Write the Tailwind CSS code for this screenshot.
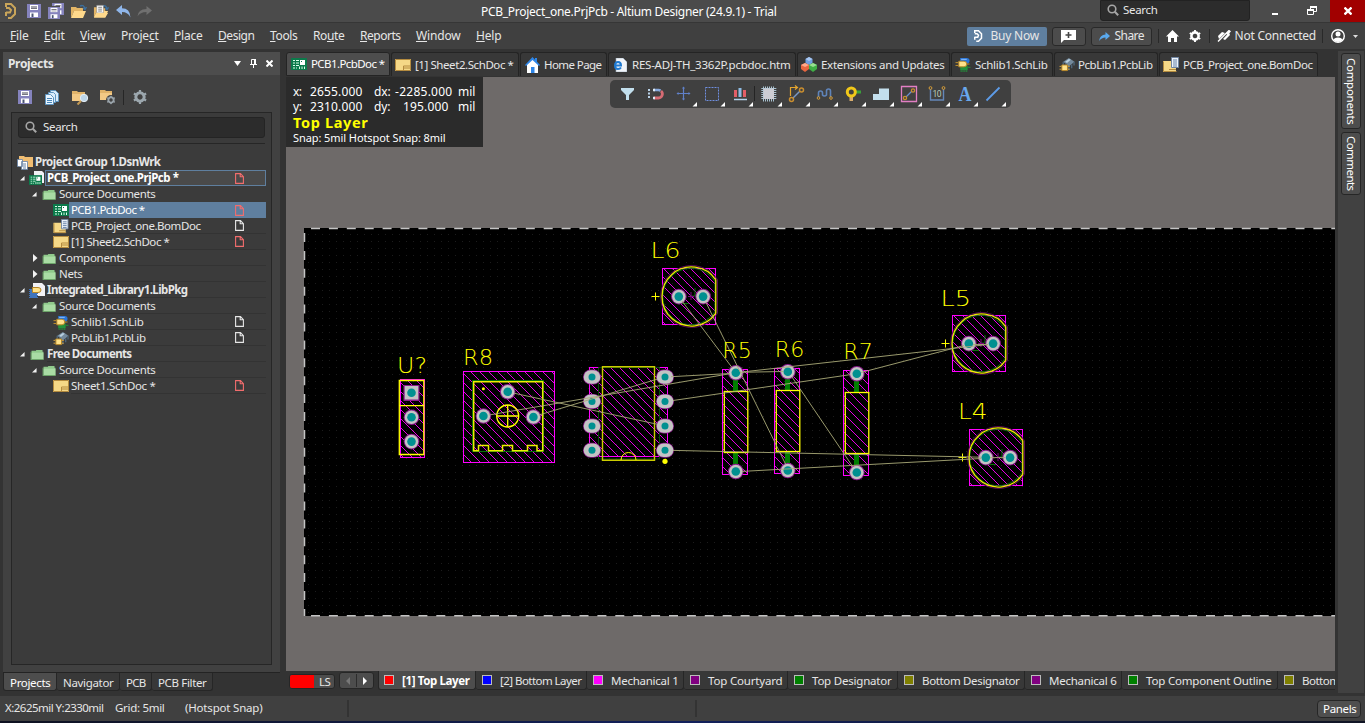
<!DOCTYPE html>
<html lang="en">
<head>
<meta charset="utf-8">
<title>PCB_Project_one.PrjPcb - Altium Designer (24.9.1) - Trial</title>
<script src="https://cdn.jsdelivr.net/npm/@tailwindcss/browser@4"></script>
</head>
<body class="w-[1365px] h-[723px] overflow-hidden bg-[#333333] text-[#e6e6e6] text-[11.5px] leading-4 font-['Noto_Sans','Open_Sans',sans-serif] flex flex-col select-none">

<svg class="hidden" aria-hidden="true">
  <defs>
    <symbol id="save" viewBox="0 0 14 14"><path fill="#8583bd" d="M0 0h14v14H0z"/><path fill="#fff" d="M3 1h8v5H3z"/><path fill="#4b4b5a" d="M4 2.5h6v1H4zM4 4.300h6v.8H4z"/><path fill="#fff" d="M3 8.500h8V13H3z"/><path fill="#4a5575" d="M4.500 9.500h2V13h-2z"/></symbol>
    <symbol id="folder" viewBox="0 0 14 12"><path fill="#8fc98b" d="M1 2h5V1h7v2h1v9H1z"/><path fill="#a9dca4" d="M1 4h13v7H1z"/><path fill="#6da56a" d="M0 3h1v9H0zM1 11h13v1H1z"/></symbol>
    <symbol id="open" viewBox="0 0 17 15"><path fill="#e3b566" d="M1 3h5l1 1h6v3H4l-3 7z"/><path fill="#ffd98c" d="M4 7h12l-3 7H1z"/><path fill="none" stroke="#3d6f9c" stroke-width="1.400" d="M10 2q4-2 5 3M13 4l2 1.500L16.500 3"/></symbol>
    <symbol id="pcb" viewBox="0 0 16 12"><path fill="#0c7a4b" d="M0 0h16v12H0z"/><path fill="#fff" d="M9 2h5v5H9z"/><path fill="#0c7a4b" d="M10 3h1v1h-1z"/><path stroke="#d7ffe9" stroke-width="1" fill="none" d="M2 2.500h2M5 2.500h3M2 5h2M5 5h3M2 7.500h2M5 7.500h3M2 10h2M5 10h1M8.500 8.500V11M11 8.500V11M13.500 8.500V11"/></symbol>
    <symbol id="sch" viewBox="0 0 16 12"><path fill="#f5d887" d="M0 0h16v12H0z"/><path fill="none" stroke="#b48b3f" d="M.5.500h15v11H.5zM8.500 7h6.500M8.500 9h6.500M8.500 7v4.500"/></symbol>
    <symbol id="bom" viewBox="0 0 16 16"><path fill="#f5d887" d="M0 4h13v11H0z"/><path stroke="#b48b3f" fill="none" d="M.5 4.500v10h13M6 12.500h7"/><path fill="#edf3fa" stroke="#7186a3" d="M8.500.500h7v10h-7z"/><path stroke="#6683a8" d="M10 3h4M10 5h4M10 7h4M10 9h4"/></symbol>
    <symbol id="schlib" viewBox="0 0 16 16"><path fill="#2b75d6" d="M5 1h7q3 0 3 3t-3 3H5z"/><path fill="#8ec1ff" d="M6 2h6v1H6z"/><path fill="#24923b" d="M5 9h8v5H5z"/><path stroke="#24923b" d="M6 14v2M8 14v2M10 14v2M12 14v2M13 11h3"/><path fill="#ffe28a" stroke="#b58424" d="M3.500 4.500H9q3 0 3 3t-3 3H3.500z"/><path stroke="#c8942c" d="M0 6h3M0 9h3M12 7.500h3"/></symbol>
    <symbol id="pcblib" viewBox="0 0 16 16"><path fill="#73899c" d="M4 5l6-4 6 4-6 5z"/><path fill="#b8d0e0" d="M6 5l4-3 2 1-4 3.500z"/><path stroke="#4d6579" stroke-width="1.500" fill="none" d="M4 5v4M7 7v4M10 10v4M13 8v4M15.500 5v4"/><path fill="#ffe28a" stroke="#b58424" d="M2.500 8.500h6v6h-6z"/><path stroke="#d6a440" d="M0 10h2M0 13h2M9 10h2M9 13h2"/></symbol>
    <symbol id="file" viewBox="0 0 9 11"><path fill="none" stroke="currentColor" stroke-width="1.100" d="M.6.600h4.900l2.900 3v6.800H.6zM5.200.600v3.200h3.200"/></symbol>
    <symbol id="down" viewBox="0 0 6 6"><path fill="#f2f2f2" d="M5.500 0v5.500H0z"/></symbol>
    <symbol id="right" viewBox="0 0 5 8"><path fill="#f2f2f2" d="M0 0l4.500 4L0 8z"/></symbol>
    <symbol id="lens" viewBox="0 0 12 12"><circle cx="5" cy="5" r="3.800" fill="none" stroke="#a6a6a6" stroke-width="1.600"/><path stroke="#a6a6a6" stroke-width="2" d="M7.800 7.800l3.400 3.400"/></symbol>
    <symbol id="gear" viewBox="0 0 14 14"><path fill="none" stroke="currentColor" stroke-width="3" d="M7 2.800a4.200 4.200 0 1 0 .01 0z"/><path stroke="currentColor" stroke-width="2.200" d="M7 0v3M7 11v3M.9 3.500l2.600 1.500M10.500 9l2.600 1.500M.9 10.500L3.500 9M10.500 5l2.600-1.500"/></symbol>
  </defs>
</svg>

<!-- Title bar -->
<header class="h-[22px] shrink-0 bg-[#4b4b4b] flex items-center relative">
  <div class="flex items-center pl-[5px]">
    <svg class="w-[12px] h-[16px] mr-[10px]" viewBox="0 0 12 16"><path fill="none" stroke="#c9a55a" stroke-width="2" d="M1 4V1h5l4 4v6l-4 4H3M1 9.500h4l1-2.500-2-2H1M1 9v4"/></svg>
    <svg class="size-[14px] mr-[7px]"><use href="#save"/></svg>
    <svg class="w-[16px] h-[16px] mr-[6px]" viewBox="0 0 16 16"><use href="#save" x="4" y="0" width="12" height="12"/><path fill="#4b4b4b" d="M0 3h12v13H0z"/><use href="#save" x="0" y="4" width="12" height="12"/></svg>
    <svg class="w-[17px] h-[15px] mr-[6px]"><use href="#open"/></svg>
    <svg class="w-[16px] h-[15px] mr-[7px]" viewBox="0 0 17 15"><use href="#open" width="17" height="15"/><path fill="#fff" stroke="#8b8b8b" stroke-width=".6" d="M4 1h7v8H4z"/><path stroke="#777" d="M5.500 3h4M5.500 5h4M5.500 7h4"/><path fill="#ffd98c" d="M4 9h12l-3 5H1z"/></svg>
    <svg class="w-[15px] h-[13px] mr-[6px]" viewBox="0 0 15 13"><path fill="#8fb6ea" d="M0 5l6-5v3.300q8 0 8.500 9.200Q12 7 6 7v3z"/></svg>
    <svg class="w-[15px] h-[11px]" viewBox="0 0 15 11"><path fill="#707070" d="M15 4.500L9.500 0v3Q1 3 .5 10.500 3 6 9.500 6v3z"/></svg>
  </div>
  <div class="absolute left-[481px] top-[4px] text-[12px] text-white"><span data-w="295">PCB_Project_one.PrjPcb - Altium Designer (24.9.1) - Trial</span></div>
  <div class="ml-auto flex items-start h-full">
    <div class="w-[150px] h-[21px] bg-[#2c2c2c] border border-[#222] rounded-b-[3px] flex items-center pl-[6px] pb-px mr-[22px]">
      <svg class="size-[12px] mr-[4px]"><use href="#lens"/></svg><span data-w="34">Search</span>
    </div>
    <svg class="w-[7px] h-[22px] mr-[28px]" viewBox="0 0 7 22"><path fill="#fff" d="M0 13h6v2H0z"/></svg>
    <svg class="w-[10px] h-[22px] mr-[13px]" viewBox="0 0 10 22"><path fill="none" stroke="#fff" d="M3.500 9V6.500h6v5H7M.5 9.500h6v5h-6z"/><path fill="#fff" d="M3 6h7v2H3zM0 9h7v2H0z"/></svg>
    <div class="w-[35px] h-[22px] bg-[#a10000] flex items-center justify-center"><svg class="size-[8px]" viewBox="0 0 8 8"><path stroke="#fff" stroke-width="2.300" d="M.5.500l7 7M7.500.500l-7 7"/></svg></div>
  </div>
</header>

<!-- Menu bar -->
<nav class="h-[27px] shrink-0 bg-[#404040] border-t border-[#363636] flex items-center">
  <div class="flex gap-[15.5px] pl-[10px] text-[12px]">
    <span data-w="18"><u>F</u>ile</span><span data-w="20"><u>E</u>dit</span><span data-w="25"><u>V</u>iew</span><span data-w="37">Proje<u>c</u>t</span><span data-w="28"><u>P</u>lace</span><span data-w="36"><u>D</u>esign</span><span data-w="27"><u>T</u>ools</span><span data-w="31">Ro<u>u</u>te</span><span data-w="40"><u>R</u>eports</span><span data-w="44"><u>W</u>indow</span><span data-w="25"><u>H</u>elp</span>
  </div>
  <div class="ml-auto flex items-center pr-[7px] text-[12px]">
    <div class="w-[80px] h-[19px] rounded-[2px] bg-[#5f7f9f] flex items-center pl-[7px] mr-[5px]"><svg class="w-[9px] h-[12px] mr-[8px]" viewBox="0 0 12 16"><path fill="none" stroke="#fff" stroke-width="2" d="M1 4V1h5l4 4v6l-4 4H3M1 9.500h4l1-2.500-2-2H1M1 9v4"/></svg><span data-w="48">Buy Now</span></div>
    <div class="w-[34px] h-[19px] rounded-[3px] bg-[#4c4c4c] border border-[#292929] flex items-center justify-center mr-[5px]"><svg class="w-[17px] h-[13px]" viewBox="0 0 17 13"><path fill="#fff" d="M1 0h15v10H4l-3 3z"/><path stroke="#444" stroke-width="1.600" d="M8.500 2v6M5.500 5h6"/></svg></div>
    <div class="w-[61px] h-[19px] rounded-[3px] bg-[#4c4c4c] border border-[#292929] flex items-center pl-[7px] mr-[6px]"><svg class="w-[11px] h-[9px] mr-[5px]" viewBox="0 0 11 9"><path fill="#5aa9ee" d="M11 4L6.500 0v2.500Q1 2.500 0 9q2.500-3.500 6.500-3.500V8z"/></svg><span data-w="29">Share</span></div>
    <i class="w-px h-[14px] bg-[#292929] mr-[7px]"></i>
    <svg class="w-[13px] h-[12px] mr-[10px]" viewBox="0 0 13 12"><path fill="#fff" d="M6.500 0L0 6.500h2V12h3V8h3v4h3V6.500h2z"/></svg>
    <svg class="size-[12px] mr-[8px] text-white"><use href="#gear"/></svg>
    <i class="w-px h-[14px] bg-[#292929] mr-[7px]"></i>
    <svg class="w-[14px] h-[12px] mr-[4px]" viewBox="0 0 14 12"><path fill="#fff" d="M1 6l4-4 3 1L2 9zM8 10l5-5-1-2.500L6 9z"/><path stroke="#fff" stroke-width="1.400" d="M12.500 0L1 11.500M10 4.500L13.500 1"/></svg>
    <span data-w="81">Not Connected</span>
    <i class="w-px h-[14px] bg-[#292929] ml-[6px] mr-[8px]"></i>
    <svg class="size-[14px] mr-[8px]" viewBox="0 0 14 14"><circle cx="7" cy="7" r="6.300" fill="none" stroke="#fff" stroke-width="1.400"/><circle cx="7" cy="5" r="2.500" fill="#fff"/><path fill="#fff" d="M2.500 11Q3 8.500 7 8.500t4.500 2.500Q9 13 7 13t-4.500-2z"/></svg>
    <svg class="w-[5px] h-[3px]" viewBox="0 0 5 3"><path fill="#ddd" d="M0 0h5L2.500 3z"/></svg>
  </div>
</nav>

<main class="flex h-[647px] shrink-0">
  <!-- Projects panel -->
  <section class="w-[283px] pl-[3px] pt-[3px] shrink-0">
    <div class="w-[277px] h-[621px] bg-[#414141] border-b border-[#232323]">
      <div class="h-[23px] bg-[#4d4d4d] flex items-center pl-[5px] pr-[7px] text-[12px] font-bold">
        <span data-w="45">Projects</span>
        <svg class="w-[7px] h-[5px] ml-auto mr-[9px]" viewBox="0 0 7 5"><path fill="#fff" d="M0 0h7L3.500 5z"/></svg>
        <svg class="w-[7px] h-[9px] mr-[9px]" viewBox="0 0 7 9"><path fill="none" stroke="#fff" d="M1.500 5V.5h4V5M0 5.500h7M3.500 5.500V9"/><path fill="#fff" d="M4 0h2v5H4z"/></svg>
        <svg class="size-[7px]" viewBox="0 0 7 7"><path stroke="#fff" stroke-width="2" d="M.5.500l6 6M6.500.500l-6 6"/></svg>
      </div>
      <div class="h-[37px] flex items-center pl-[15px] pt-[7px]">
        <svg class="size-[14px] mr-[13px]"><use href="#save"/></svg>
        <svg class="w-[14px] h-[15px] mr-[13px]" viewBox="0 0 14 15"><path fill="#d9ecfb" stroke="#5f95bf" d="M5.500.500h5l3 3v8h-8z"/><path fill="#d9ecfb" stroke="#5f95bf" d="M3.500 2.500h5l2 2v8h-7z"/><path fill="#e9f5ff" stroke="#5f95bf" d="M.5 4.500h5l3 3v7h-8z"/><path stroke="#4986b8" d="M2 8.500h5M2 10.500h5M2 12.500h5"/></svg>
        <svg class="w-[17px] h-[15px] mr-[11px]" viewBox="0 0 17 15"><path fill="#e0b36a" d="M0 1h5l1 1h7v9H0z"/><path fill="#f2c985" d="M0 4h13v7H0z"/><circle cx="12" cy="8" r="3.700" fill="#bcd5e8" stroke="#e3edf5"/><path stroke="#c39a55" stroke-width="2" d="M9 11l-3.500 3.500"/></svg>
        <svg class="w-[16px] h-[16px] mr-[7px]" viewBox="0 0 16 16"><path fill="#e0b36a" d="M0 1h5l1 1h6v9H0z"/><path fill="#f2c985" d="M0 4h12v7H0z"/><circle cx="11" cy="11" r="5" fill="#414141"/><svg x="6.500" y="6.500" width="9" height="9" color="#9aa4ab"><use href="#gear"/></svg></svg>
        <i class="w-px h-[15px] bg-[#262626] mr-[9px]"></i>
        <svg class="size-[14px] text-[#9ca7ae]"><use href="#gear"/></svg>
      </div>
      <div class="ml-[8px] w-[261px] h-[553px] bg-[#3b3b3b] border border-[#262626] pl-[6px]">
        <div class="mt-[4px] w-[247px] h-[21px] bg-[#2c2c2c] border border-[#242424] rounded-[3px] flex items-center pl-[6px] pb-px"><svg class="size-[12px] mr-[6px]"><use href="#lens"/></svg><span data-w="34">Search</span></div>
        <div class="mt-[5px] w-[247px] h-px bg-[#262626]"></div>
        <!-- Project tree -->
        <div class="mt-[10px] w-[248px]">
          <div class="flex h-4 items-center font-bold"><svg class="w-[16px] h-[15px] mr-px -ml-px" viewBox="0 0 16 15"><path fill="#f0bd72" d="M2 1h5l1 1h8v10H2z"/><path fill="#fff" stroke="#6682a5" stroke-width=".8" d="M.5 4.500h5v7h-5zM4.500 6.500h6v8h-6z"/><path stroke="#6682a5" d="M6 9h3M6 11h3M6 13h3"/></svg><span data-w="125" class="ml-px">Project Group 1.DsnWrk</span></div>
          <div class="flex h-4 items-center font-bold text-white"><svg class="size-[5px] ml-[2px] mr-[4px]"><use href="#down"/></svg><svg class="w-[16px] h-[15px]" viewBox="0 0 16 15"><path fill="#f1f1f5" d="M5 0h8l2 2v10H5z"/><use href="#pcb" y="4" width="13" height="10"/></svg><div class="flex items-center w-[221px] h-4 border border-[#5f7f9f] bg-[#4a4a4a] pl-px"><span data-w="131">PCB_Project_one.PrjPcb *</span><svg class="w-[9px] h-[11px] ml-auto mr-[21px] text-[#f26d6d]"><use href="#file"/></svg></div></div>
          <div class="flex h-4 items-center"><svg class="size-[5px] ml-[14px] mr-[5px]"><use href="#down"/></svg><svg class="w-[14px] h-[11px] mr-[3px]"><use href="#folder"/></svg><div class="flex items-center w-[207px] h-4"><span data-w="96">Source Documents</span></div></div>
          <div class="flex h-4 items-center"><svg class="w-[16px] h-[12px] ml-[35px]"><use href="#pcb"/></svg><div class="flex items-center w-[197px] h-4 bg-[#5f7f9f] text-white pl-[2px]"><span data-w="73">PCB1.PcbDoc *</span><svg class="w-[9px] h-[11px] ml-auto mr-[22px] text-[#f26d6d]"><use href="#file"/></svg></div></div>
          <div class="flex h-4 items-center"><svg class="w-[16px] h-[15px] ml-[35px] mr-[2px]"><use href="#bom"/></svg><div class="flex items-center w-[195px] h-4 border-b border-[#333]"><span data-w="129">PCB_Project_one.BomDoc</span><svg class="w-[9px] h-[11px] ml-auto mr-[22px]"><use href="#file"/></svg></div></div>
          <div class="flex h-4 items-center"><svg class="w-[16px] h-[12px] ml-[35px] mr-[2px]"><use href="#sch"/></svg><div class="flex items-center w-[195px] h-4 border-b border-[#333]"><span data-w="98">[1] Sheet2.SchDoc *</span><svg class="w-[9px] h-[11px] ml-auto mr-[22px] text-[#f26d6d]"><use href="#file"/></svg></div></div>
          <div class="flex h-4 items-center"><svg class="w-[5px] h-[8px] ml-[15px] mr-[4px]"><use href="#right"/></svg><svg class="w-[14px] h-[11px] mr-[3px]"><use href="#folder"/></svg><div class="flex items-center w-[207px] h-4 border-b border-[#333]"><span data-w="66">Components</span></div></div>
          <div class="flex h-4 items-center"><svg class="w-[5px] h-[8px] ml-[15px] mr-[4px]"><use href="#right"/></svg><svg class="w-[14px] h-[11px] mr-[3px]"><use href="#folder"/></svg><div class="flex items-center w-[207px] h-4 border-b border-[#333]"><span data-w="23">Nets</span></div></div>
          <div class="flex h-4 items-center font-bold"><svg class="size-[5px] ml-[2px] mr-[4px]"><use href="#down"/></svg><svg class="w-[16px] h-[15px] mr-[2px]" viewBox="0 0 16 15"><path fill="#f1f1f5" d="M4 0h9l3 3v10H4z"/><path fill="#3f74bd" d="M1 7h7v7H1z"/><path stroke="#3f74bd" stroke-dasharray="1 1" stroke-width="9" d="M4.500 6v9"/><path fill="#ffe28a" stroke="#b58424" d="M3.500 4.500H9q3 0 3 2.500t-3 2.500H3.500z"/></svg><div class="flex items-center w-[219px] h-4 border-b border-[#333]"><span data-w="140">Integrated_Library1.LibPkg</span></div></div>
          <div class="flex h-4 items-center"><svg class="size-[5px] ml-[14px] mr-[5px]"><use href="#down"/></svg><svg class="w-[14px] h-[11px] mr-[3px]"><use href="#folder"/></svg><div class="flex items-center w-[207px] h-4 border-b border-[#333]"><span data-w="96">Source Documents</span></div></div>
          <div class="flex h-4 items-center"><svg class="w-[16px] h-[15px] ml-[35px] mr-[2px]"><use href="#schlib"/></svg><div class="flex items-center w-[195px] h-4 border-b border-[#333]"><span data-w="72">Schlib1.SchLib</span><svg class="w-[9px] h-[11px] ml-auto mr-[22px]"><use href="#file"/></svg></div></div>
          <div class="flex h-4 items-center"><svg class="w-[16px] h-[15px] ml-[35px] mr-[2px]"><use href="#pcblib"/></svg><div class="flex items-center w-[195px] h-4 border-b border-[#333]"><span data-w="74">PcbLib1.PcbLib</span><svg class="w-[9px] h-[11px] ml-auto mr-[22px]"><use href="#file"/></svg></div></div>
          <div class="flex h-4 items-center font-bold"><svg class="size-[5px] ml-[2px] mr-[5px]"><use href="#down"/></svg><svg class="w-[14px] h-[11px] mr-[3px]"><use href="#folder"/></svg><div class="flex items-center w-[219px] h-4 border-b border-[#333]"><span data-w="84">Free Documents</span></div></div>
          <div class="flex h-4 items-center"><svg class="size-[5px] ml-[14px] mr-[5px]"><use href="#down"/></svg><svg class="w-[14px] h-[11px] mr-[3px]"><use href="#folder"/></svg><div class="flex items-center w-[207px] h-4 border-b border-[#333]"><span data-w="96">Source Documents</span></div></div>
          <div class="flex h-4 items-center"><svg class="w-[16px] h-[12px] ml-[35px] mr-[2px]"><use href="#sch"/></svg><div class="flex items-center w-[195px] h-4 border-b border-[#333]"><span data-w="84">Sheet1.SchDoc *</span><svg class="w-[9px] h-[11px] ml-auto mr-[22px] text-[#f26d6d]"><use href="#file"/></svg></div></div>
        </div>
      </div>
    </div>
    <div class="flex h-[18px]">
      <div class="w-[54px] bg-[#4d4d4d] border border-t-0 border-[#262626] rounded-b-[3px] pl-[6px] text-white leading-[19px]"><span data-w="40">Projects</span></div>
      <div class="w-[63px] bg-[#383838] border-r border-b border-[#262626] rounded-b-[3px] pl-[6px] leading-[19px]"><span data-w="50">Navigator</span></div>
      <div class="w-[32px] bg-[#383838] border-r border-b border-[#262626] rounded-b-[3px] pl-[6px] leading-[19px]"><span data-w="19">PCB</span></div>
      <div class="w-[61px] bg-[#383838] border-r border-b border-[#262626] rounded-b-[3px] pl-[6px] leading-[19px]"><span data-w="48">PCB Filter</span></div>
    </div>
  </section>

  <!-- Document area -->
  <section class="w-[1052px] pl-[3px] shrink-0 flex flex-col">
    <div class="h-[28px] pt-[3px] flex gap-px shrink-0">
      <div class="w-[104px] h-[24px] bg-[#4d4d4d] border border-[#242424] rounded-t-[3px] flex items-center pl-[4px] text-white"><svg class="w-[16px] h-[12px] mr-[4px]"><use href="#pcb"/></svg><span data-w="73">PCB1.PcbDoc *</span></div>
      <div class="w-[128px] h-[24px] bg-[#383838] border border-b-0 border-[#242424] rounded-t-[3px] flex items-center pl-[3px]"><svg class="w-[16px] h-[12px] mr-[4px]"><use href="#sch"/></svg><span data-w="98">[1] Sheet2.SchDoc *</span></div>
      <div class="w-[87px] h-[24px] bg-[#383838] border border-b-0 border-[#242424] rounded-t-[3px] flex items-center pl-[4px]"><svg class="w-[15px] h-[16px] mr-[4px]" viewBox="0 0 15 16"><path fill="#fff" d="M2 7l5.500-5L13 7v9H2z"/><path fill="#2e86e8" d="M7.500 0L0 8l1 1 6.500-6L14 9l1-1-3-3.200V1h-2v1.700zM6 10h3.500v6H6z"/></svg><span data-w="57">Home Page</span></div>
      <div class="w-[188px] h-[24px] bg-[#383838] border border-b-0 border-[#242424] rounded-t-[3px] flex items-center pl-[4px]"><svg class="w-[14px] h-[14px] mr-[5px]" viewBox="0 0 14 14"><path fill="#f2f5fa" stroke="#9ab" stroke-width=".6" d="M3 0h7l4 4v10H3z"/><path fill="none" stroke="#1f7ad1" stroke-width="2" d="M2 7.500h6Q8 4 5 4T2 7.500 5 11q2 0 3-1.500"/></svg><span data-w="158">RES-ADJ-TH_3362P.pcbdoc.htm</span></div>
      <div class="w-[153px] h-[24px] bg-[#383838] border border-b-0 border-[#242424] rounded-t-[3px] flex items-center pl-[3px]"><svg class="w-[16px] h-[15px] mr-[4px]" viewBox="0 0 16 15"><path fill="#6f9fe0" d="M8 0l3.500 2v4L8 8 4.500 6V2z"/><path fill="#a9c8f2" d="M8 0l3.500 2L8 4 4.500 2z"/><path fill="#e8663f" d="M4 6l4 2v4l-4 3-4-3V8z"/><path fill="#ffa98a" d="M4 6l4 2-4 2-4-2z"/><path fill="#3fae45" d="M12 6l4 2v4l-4 3-4-3V8z"/><path fill="#98e092" d="M12 6l4 2-4 2-4-2z"/></svg><span data-w="123">Extensions and Updates</span></div>
      <div class="w-[102px] h-[24px] bg-[#383838] border border-b-0 border-[#242424] rounded-t-[3px] flex items-center pl-[3px]"><svg class="w-[16px] h-[15px] mr-[4px]"><use href="#schlib"/></svg><span data-w="72">Schlib1.SchLib</span></div>
      <div class="w-[104px] h-[24px] bg-[#383838] border border-b-0 border-[#242424] rounded-t-[3px] flex items-center pl-[4px]"><svg class="w-[16px] h-[15px] mr-[3px]"><use href="#pcblib"/></svg><span data-w="74">PcbLib1.PcbLib</span></div>
      <div class="w-[159px] h-[24px] bg-[#383838] border border-b-0 border-[#242424] rounded-t-[3px] flex items-center pl-[3px]"><svg class="w-[16px] h-[16px] mr-[4px]"><use href="#bom"/></svg><span data-w="129">PCB_Project_one.BomDoc</span></div>
    </div>

    <div class="relative h-[594px] w-[1049px] bg-[#6e6a69] shrink-0">
      <!-- Board canvas: viewBox uses window coordinates -->
      <svg class="block w-[1049px] h-[594px]" viewBox="286 77 1049 594">
        <defs>
          <pattern id="dots" x="305" y="231" width="7" height="7" patternUnits="userSpaceOnUse"><path fill="#1c1c1c" d="M3 3h1v1H3z"/></pattern>
          <pattern id="hatch" width="9" height="9" patternUnits="userSpaceOnUse"><path stroke="#f0f" stroke-width=".9" d="M-1-1l11 11M-1 8l2 2M8-1l2 2"/></pattern>
          <g id="pad"><circle r="7.800" fill="#8a1a8a"/><circle r="6.800" fill="#c3c3c3"/><circle r="4.300" fill="#009090"/></g>
          <g id="oval"><rect x="-9" y="-7.500" width="18" height="15" rx="7.500" fill="#8a1a8a"/><rect x="-8.300" y="-6.800" width="16.600" height="13.600" rx="6.800" fill="#c3c3c3"/><circle r="3.500" fill="#009090"/></g>
          <g id="led" fill="none">
            <rect x="-28.500" y="-27.500" width="53" height="56" fill="url(#hatch)" stroke="#f0f"/>
            <path stroke="#5a0a5a" d="M26.500-16.500A31 31 0 1 0 26.500 17.500z"/>
            <path stroke="#087008" d="M24-14.500A28.300 28.300 0 1 0 24 15.500z"/>
            <path stroke="#ee0" stroke-width="1.300" d="M24.800-16.200A29.500 29.500 0 1 0 24.800 17.200z"/>
            <path stroke="#087008" d="M4-8v8h-5M-10 7.500h8"/><path stroke="#800080" d="M-3 .5h6M0-4v8"/>
            <path stroke="#ff0" d="M-39.500.500h8M-35.500-3.500v8"/>
            <use href="#pad" x="-12.200" y=".6"/><use href="#pad" x="12.100" y=".6"/>
          </g>
          <g id="res" fill="none">
            <rect x="-13.500" y="-2.500" width="25" height="105" fill="url(#hatch)" stroke="#f0f"/>
            <path stroke="#007e00" stroke-width="5" d="M-.5 0v99"/>
            <rect x="-11.700" y="19.500" width="23.500" height="61" fill="#000"/>
            <rect x="-11.700" y="19.500" width="23.500" height="61" fill="url(#hatch)" stroke="#ff0" stroke-width="1.300"/>
            <use href="#pad" x="-.2" y=".7"/><use href="#pad" x="-.2" y="99.500"/>
          </g>
        </defs>
        <path fill="#000" d="M304 228h1031v388H304z"/>
        <path fill="url(#dots)" d="M305 230h1030v384H305z"/>
        <g stroke="#c4c4c4" stroke-width="1.500" stroke-dasharray="9 8.900" fill="none">
          <path d="M311 228.500h1024M311 615.800h1024M304.500 233v383"/>
        </g>

        <!-- U? -->
        <rect x="400.500" y="379.500" width="24" height="78" fill="url(#hatch)" stroke="#f0f"/>
        <path fill="none" stroke="#ff0" stroke-width="1.300" d="M399.300 380.500h24.500v74h-24.500zM399.300 405.700h24.500"/>
        <path fill="#8a1a8a" d="M403.500 385h16v16h-16z"/><path fill="#c3c3c3" d="M404.700 386h13.600v13.500h-13.600z"/><circle cx="411.500" cy="392.700" r="4.300" fill="#009090"/>
        <use href="#pad" x="411.500" y="417.300"/><use href="#pad" x="411.500" y="441.600"/>

        <!-- R8 -->
        <rect x="463.500" y="371.500" width="91" height="91" fill="url(#hatch)" stroke="#f0f"/>
        <path fill="none" stroke="#087008" d="M472.500 380.500h71v71h-71z"/>
        <path fill="none" stroke="#ee0" stroke-width="1.500" d="M473.700 381.700h69v69H537v-5.200h-9.500v5.200h-15v-5.200h-10v5.200h-14v-5.200h-10v5.200h-4.800z"/>
        <g fill="none" stroke="#ff0" stroke-width="1.300"><circle cx="507.700" cy="416" r="11"/><path d="M496.700 416h22M507.700 405v22"/></g>
        <circle cx="483.400" cy="388.700" r="1.500" fill="#ff0"/>
        <use href="#pad" x="507.700" y="391.800"/><use href="#pad" x="483.400" y="416"/><use href="#pad" x="533.400" y="417"/>

        <!-- DIP-8 -->
        <rect x="589.500" y="367.500" width="78" height="89" fill="url(#hatch)" stroke="#f0f"/>
        <path fill="none" stroke="#064d06" d="M598.500 367.500h61v91.500h-61z"/>
        <path fill="none" stroke="#cc0" stroke-width="1.400" d="M602.500 366.700h52v93.600h-52z"/><path fill="none" stroke="#ff0" d="M621 460a7.500 7.500 0 0 1 15 0"/>
        <use href="#oval" x="592" y="377"/><use href="#oval" x="592" y="401.400"/><use href="#oval" x="592" y="426"/><use href="#oval" x="592" y="450.300"/>
        <use href="#oval" x="665" y="377"/><use href="#oval" x="665" y="401.400"/><use href="#oval" x="665" y="426"/><use href="#oval" x="665" y="450.300"/>
        <circle cx="665" cy="461.300" r="2.600" fill="#ff0"/>

        <use href="#res" x="736" y="372"/><use href="#res" x="788" y="371"/><use href="#res" x="857" y="373"/>
        <use href="#led" x="691" y="296"/><use href="#led" x="981" y="343"/><use href="#led" x="998" y="457"/>

        <!-- Connection lines -->
        <g stroke="#aaaa78" stroke-width=".9" fill="none">
          <path d="M682 301L732 367.500M706 302.500L785.500 464M792 377L853 467M740 372.300L783 371.500M671 376.700L730 373.500M742 372L988 344.500M861 372.500L964 345.500M673 400.500L850 374.700M673 450.400L981 457.200M742 471.400L981 458.500M973 344.500h15M990 457.600h15"/>
          <path d="M514 393.200L657 424.200M489 415L730 373.700M539 415L657 379.200"/>
        </g>

        <g fill="#ff0" font-family="DejaVu Sans Light, 'DejaVu Sans', Inter, sans-serif" font-weight="200" font-size="21.500">
          <text x="650.500" y="258.300" textLength="30" lengthAdjust="spacingAndGlyphs">L6</text>
          <text x="722.300" y="358" textLength="29.500" lengthAdjust="spacingAndGlyphs">R5</text>
          <text x="774.800" y="357" textLength="29.500" lengthAdjust="spacingAndGlyphs">R6</text>
          <text x="843.300" y="359" textLength="29.500" lengthAdjust="spacingAndGlyphs">R7</text>
          <text x="397" y="372.500" textLength="30" lengthAdjust="spacingAndGlyphs">U?</text>
          <text x="463" y="365.200" textLength="30" lengthAdjust="spacingAndGlyphs">R8</text>
          <text x="940.500" y="306" textLength="30.500" lengthAdjust="spacingAndGlyphs">L5</text>
          <text x="958" y="419" textLength="29.500" lengthAdjust="spacingAndGlyphs">L4</text>
        </g>
      </svg>

      <!-- Heads-up display -->
      <div class="absolute left-0 top-0 w-[197px] h-[70px] bg-[#2b2b2b] text-white pl-[7px] pt-[7px] text-[12px] leading-[15px]">
        <div class="flex h-[15px]"><div class="w-[17px]"><span data-w="8">x:</span></div><div class="w-[64px]"><span data-w="52">2655.000</span></div><div class="w-[21px]"><span data-w="16">dx:</span></div><div class="w-[63px]"><span data-w="57">-2285.000</span></div><span data-w="17">mil</span></div>
        <div class="flex h-[15px]"><div class="w-[17px]"><span data-w="8">y:</span></div><div class="w-[64px]"><span data-w="52">2310.000</span></div><div class="w-[29px]"><span data-w="16">dy:</span></div><div class="w-[55px]"><span data-w="45">195.000</span></div><span data-w="17">mil</span></div>
        <div class="h-[17px] leading-[17px] text-[14.500px] font-bold text-[#ff0]"><span data-w="75">Top Layer</span></div>
        <div class="h-[13px] text-[11px] leading-[13px]"><span data-w="152">Snap: 5mil Hotspot Snap: 8mil</span></div>
      </div>

      <!-- Active bar -->
      <div class="absolute left-[324px] top-[3px] w-[401px] h-[28px] bg-[#404040] rounded-[5px]">
        <svg class="block w-[401px] h-[28px]" viewBox="610 80 401 28">
          <path fill="#c2dfed" d="M621 88h13v2l-5 5v5h-3v-5l-5-5z"/>
          <path fill="none" stroke="#87a8dc" stroke-width="2.600" d="M654 90h4.500a4 4 0 0 1 2 .6"/><path fill="none" stroke="#d66b73" stroke-width="2.800" d="M654 98h4.500a4 4 0 0 0 2.500-7"/><path stroke="#b9d2e8" stroke-width="2" stroke-dasharray="2 1.500" d="M649 89v10"/><path stroke="#dceaf5" stroke-width="2.500" d="M653 90h2M653 98h2"/>
          <path stroke="#6080c8" stroke-width="1.200" d="M683.500 87v13M677 93.500h13"/><path fill="#6080c8" d="M682 88.500h3l-1.500-2zM682 98.500h3l-1.500 2zM678.500 92v3l-2-1.500zM688.500 92v3l2-1.500z"/>
          <path fill="none" stroke="#6f8fe0" stroke-dasharray="2 1" d="M705.500 87.500h13v13h-13z"/>
          <path stroke="#e25e68" stroke-width="3" d="M735.500 90v7M744.500 90v7"/><path stroke="#8fbce5" stroke-width="3" d="M740 88v9"/><path stroke="#b3d1eb" stroke-width="1.500" d="M734 99.500h13"/>
          <path stroke="#242424" d="M754.500 86v15"/>
          <path stroke="#a9c3d2" stroke-width="15" stroke-dasharray="1 1" d="M763 94h12"/><path stroke="#a9c3d2" stroke-dasharray="1 1" stroke-width="15" d="M768.800 88v12"/><path fill="#cccdd4" d="M763.500 88.500h10.500v10.500h-10.500z"/>
          <path fill="none" stroke="#e4a52e" stroke-width="1.200" d="M790.500 96v-8.500h6M795 85.500l2.500 2-2.500 2"/><path stroke="#7898c8" stroke-width="1.500" d="M793 98l7-7"/><g fill="none" stroke="#c98e2f" stroke-width="1.500"><circle cx="791.500" cy="99.500" r="2"/><circle cx="801.500" cy="90" r="2"/></g>
          <path fill="none" stroke="#5f84ba" stroke-width="1.600" d="M818.500 97v-4a2 2 0 0 1 4 0v2a2.500 2.500 0 0 0 4 0v-4a2 2 0 0 1 4 0v6"/><g fill="none" stroke="#d39b38"><circle cx="818.500" cy="98" r="1.300"/><circle cx="831" cy="98" r="1.300"/></g>
          <path fill="#3aa03a" d="M856 90.500h5v3h-5z"/><path fill="#d9ad6d" d="M849.500 95h3.500v6h-3.500z"/><circle cx="851.300" cy="92" r="4" fill="none" stroke="#f1c819" stroke-width="3"/>
          <path fill="#c3dfed" d="M873 94h6v-5.500h10V100h-16z"/>
          <path fill="none" stroke="#e27fc3" stroke-width="1.300" d="M901.500 86.500h15v15h-15z"/><path stroke="#6b8fd0" stroke-width="1.300" d="M906 97l6-6"/><g fill="none" stroke="#c98e2f" stroke-width="1.300"><circle cx="905" cy="98" r="1.600"/><circle cx="913" cy="90.500" r="1.600"/></g>
          <path fill="none" stroke="#6487b8" stroke-width="1.400" d="M930.500 89v11h13V89"/><circle cx="930.500" cy="88" r="1.400" fill="none" stroke="#d39b38"/><circle cx="943.500" cy="88" r="1.400" fill="none" stroke="#d39b38"/><text x="932.500" y="97" font-family="Roboto, sans-serif" font-size="8.500" textLength="9" fill="#b9ccb9">10</text>
          <text x="958.500" y="101" font-family="Liberation Serif, serif" font-size="20" font-weight="bold" fill="#68a8ed" textLength="13" lengthAdjust="spacingAndGlyphs">A</text>
          <path stroke="#5d9ce8" stroke-width="1.800" d="M986.500 100.500l13-13"/>
          <path fill="#fff" d="M697 102v4.500h-4.500zM725 102v4.500h-4.500zM753 102v4.500h-4.500zM782 102v4.500h-4.500zM810 102v4.500h-4.500zM838 102v4.500h-4.500zM866 102v4.500h-4.500zM894 102v4.500h-4.500zM922 102v4.500h-4.500zM950 102v4.500h-4.500zM978 102v4.500h-4.500zM1006 102v4.500h-4.500z"/>
        </svg>
      </div>
    </div>

    <!-- Layer tabs -->
    <div class="flex h-[19px] w-[1049px] overflow-hidden shrink-0 leading-[18px]">
      <div class="mt-[3px] ml-[3px] w-[46px] h-[15px] shrink-0 flex border border-[#262626] rounded-[3px] overflow-hidden bg-[#4d4d4d] mr-[4px]"><div class="w-[24px] shrink-0 bg-[#f00]"></div><div class="pl-[5px] leading-[13px]"><span data-w="11">LS</span></div></div>
      <div class="mt-[1px] w-[35px] h-[17px] shrink-0 flex items-center justify-between px-[6px] border border-[#262626] rounded-[3px] bg-[#4d4d4d] mr-[4px]"><svg class="w-[4px] h-[8px]" viewBox="0 0 4 8"><path fill="#777" d="M4 0v8L0 4z"/></svg><i class="w-px h-[13px] bg-[#2c2c2c]"></i><svg class="w-[4px] h-[8px]" viewBox="0 0 4 8"><path fill="#fff" d="M0 0v8l4-4z"/></svg></div>
      <div class="w-[98px] shrink-0 flex items-center pl-[5px] border border-t-0 border-[#262626] rounded-b-[3px] bg-[#4d4d4d] text-white font-bold"><i class="size-[10px] bg-[#f00] border border-[#bbb] mr-[8px]"></i><span data-w="67" class="pt-px">[1] Top Layer</span></div>
      <div class="w-[111px] shrink-0 flex items-center pl-[6px] border-r border-b border-[#262626] rounded-b-[3px] bg-[#383838]"><i class="size-[10px] bg-[#00f] border border-[#bbb] mr-[8px]"></i><span data-w="81" class="pt-px">[2] Bottom Layer</span></div>
      <div class="w-[97px] shrink-0 flex items-center pl-[6px] border-r border-b border-[#262626] rounded-b-[3px] bg-[#383838]"><i class="size-[10px] bg-[#f0f] border border-[#bbb] mr-[8px]"></i><span data-w="67" class="pt-px">Mechanical 1</span></div>
      <div class="w-[104px] shrink-0 flex items-center pl-[6px] border-r border-b border-[#262626] rounded-b-[3px] bg-[#383838]"><i class="size-[10px] bg-[#800080] border border-[#bbb] mr-[8px]"></i><span data-w="74" class="pt-px">Top Courtyard</span></div>
      <div class="w-[110px] shrink-0 flex items-center pl-[6px] border-r border-b border-[#262626] rounded-b-[3px] bg-[#383838]"><i class="size-[10px] bg-[#008000] border border-[#bbb] mr-[8px]"></i><span data-w="79" class="pt-px">Top Designator</span></div>
      <div class="w-[127px] shrink-0 flex items-center pl-[6px] border-r border-b border-[#262626] rounded-b-[3px] bg-[#383838]"><i class="size-[10px] bg-[#808000] border border-[#bbb] mr-[8px]"></i><span data-w="97" class="pt-px">Bottom Designator</span></div>
      <div class="w-[97px] shrink-0 flex items-center pl-[6px] border-r border-b border-[#262626] rounded-b-[3px] bg-[#383838]"><i class="size-[10px] bg-[#800080] border border-[#bbb] mr-[8px]"></i><span data-w="67" class="pt-px">Mechanical 6</span></div>
      <div class="w-[156px] shrink-0 flex items-center pl-[6px] border-r border-b border-[#262626] rounded-b-[3px] bg-[#383838]"><i class="size-[10px] bg-[#008000] border border-[#bbb] mr-[8px]"></i><span data-w="125" class="pt-px">Top Component Outline</span></div>
      <div class="w-[57px] shrink-0 flex items-center overflow-hidden pl-[6px] border-b border-[#262626] bg-[#383838]"><i class="size-[10px] bg-[#808000] border border-[#bbb] mr-[8px] shrink-0"></i><span data-w="37" class="pt-px">Bottom</span></div>
    </div>
  </section>

  <!-- Right dock -->
  <aside class="w-[30px] pl-[3px] pr-px pt-[2px]">
    <div class="h-[642px] bg-[#414141] pl-[3px] pt-[2px] flex flex-col gap-[3px]">
      <div class="w-[20px] h-[76px] rounded-[3px] border border-[#262626] bg-[#4d4d4d] [writing-mode:vertical-rl] leading-[18px] pt-[4px] text-white"><span data-h="66">Components</span></div>
      <div class="w-[20px] h-[63px] rounded-[3px] border border-[#262626] bg-[#4d4d4d] [writing-mode:vertical-rl] leading-[18px] pt-[3px] text-white"><span data-h="54">Comments</span></div>
    </div>
  </aside>
</main>

<!-- Status bar -->
<footer class="h-[25px] shrink-0 bg-[#404040] flex items-center pl-[5px] pr-[4px]">
  <div class="w-[110px] pb-px"><span data-w="98">X:2625mil Y:2330mil</span></div>
  <div class="w-[70px] pb-px"><span data-w="49">Grid: 5mil</span></div>
  <div class="w-[162px] pb-px"><span data-w="77">(Hotspot Snap)</span></div>
  <i class="w-[2px] h-[17px] bg-[#333] mr-[346px]"></i>
  <i class="w-[2px] h-[17px] bg-[#333]"></i>
  <div class="ml-auto w-[44px] h-[18px] mt-px rounded-[4px] border border-[#262626] bg-[#4f4f4f] pl-[5px] leading-4 text-white"><span data-w="33">Panels</span></div>
</footer>
<div class="h-[2px] shrink-0 bg-linear-to-r from-[#0e1120] via-[#12205c] to-[#101424]"></div>

<script>
function fitLabels() {
  document.querySelectorAll('[data-w],[data-h]').forEach(function (el) {
    var vertical = el.hasAttribute('data-h');
    var target = parseFloat(vertical ? el.dataset.h : el.dataset.w);
    el.style.display = 'inline-block';
    el.style.whiteSpace = 'nowrap';
    el.style.flexShrink = '0';
    el.style.letterSpacing = '0px';
    var box = el.getBoundingClientRect();
    var size = vertical ? box.height : box.width;
    el.style.letterSpacing = ((target + 0.5 - size) / el.textContent.length) + 'px';
  });
}
window.addEventListener('load', function () {
  fitLabels();
  document.fonts.ready.then(fitLabels);
  requestAnimationFrame(fitLabels);
  setTimeout(fitLabels, 60);
});
</script>
</body>
</html>
